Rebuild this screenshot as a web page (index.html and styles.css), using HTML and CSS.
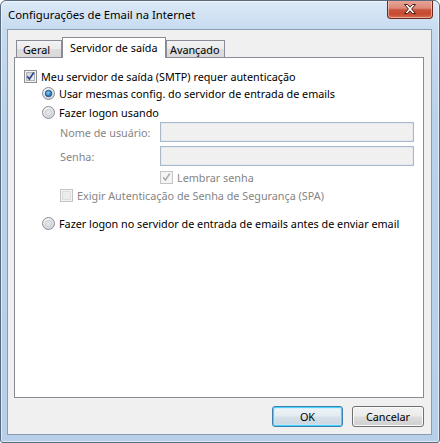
FILE: index.html
```html
<!DOCTYPE html>
<html lang="pt-BR">
<head>
<meta charset="utf-8">
<title>Configurações de Email na Internet</title>
<link rel="stylesheet" href="styles.css">
</head>
<body>
<div class="window">
  <div class="titlebar">
    <span class="title">Configurações de Email na Internet</span>
    <div class="close">
      <svg width="16" height="12" viewBox="0 0 16 12">
        <path d="M2.5 1.5 L5.5 1.5 L8 4.2 L10.5 1.5 L13.5 1.5 L9.6 6 L13.5 10.5 L10.5 10.5 L8 7.8 L5.5 10.5 L2.5 10.5 L6.4 6 Z" fill="#ffffff" stroke="#4a1e14" stroke-width="1" stroke-linejoin="round"/>
      </svg>
    </div>
  </div>
  <div class="client">
    <div class="tabs">
      <div class="tab geral">Geral</div>
      <div class="tab active">Servidor de saída</div>
      <div class="tab avancado">Avançado</div>
    </div>
    <div class="panel">
      <div class="row r1">
        <svg class="box" width="13" height="13" viewBox="0 0 13 13">
          <defs><linearGradient id="cb1" x1="0" y1="0" x2="1" y2="1"><stop offset="0" stop-color="#cbcfd5"/><stop offset="1" stop-color="#f6f6f6"/></linearGradient></defs>
          <rect x="0.5" y="0.5" width="12" height="12" fill="#f4f4f4" stroke="#8f8f8f"/>
          <rect x="2.5" y="2.5" width="8" height="8" fill="url(#cb1)" stroke="#aeb3b9"/>
          <path d="M3.2 6.2 L5.4 9 L9.8 2.6" fill="none" stroke="#35488a" stroke-width="1.7"/>
        </svg>
        <span>Meu servidor de saída (SMTP) requer autenticação</span>
      </div>
      <div class="row r2 ind1">
        <svg class="box" width="13" height="13" viewBox="0 0 13 13">
          <defs>
            <radialGradient id="rb1" cx="0.4" cy="0.3" r="0.8"><stop offset="0" stop-color="#ffffff"/><stop offset="1" stop-color="#c8ccd2"/></radialGradient>
            <radialGradient id="rd1" cx="0.45" cy="0.4" r="0.7"><stop offset="0" stop-color="#8fd4f8"/><stop offset="0.6" stop-color="#2a79b8"/><stop offset="1" stop-color="#174c86"/></radialGradient>
          </defs>
          <circle cx="6.5" cy="6.5" r="6" fill="url(#rb1)" stroke="#8a8e94"/>
          <circle cx="6.5" cy="6.5" r="3.3" fill="url(#rd1)" stroke="#1e4f84" stroke-width="0.8"/>
        </svg>
        <span>Usar mesmas config. do servidor de entrada de emails</span>
      </div>
      <div class="row r3 ind1">
        <svg class="box" width="13" height="13" viewBox="0 0 13 13">
          <defs><radialGradient id="rb2" cx="0.4" cy="0.3" r="0.8"><stop offset="0" stop-color="#ffffff"/><stop offset="1" stop-color="#c8ccd2"/></radialGradient></defs>
          <circle cx="6.5" cy="6.5" r="6" fill="url(#rb2)" stroke="#8a8e94"/>
          <circle cx="6.5" cy="6.5" r="3.3" fill="#e1e3e6" stroke="#c4c8cd" stroke-width="0.8"/>
        </svg>
        <span>Fazer logon usando</span>
      </div>
      <div class="field r4">
        <span class="lbl">Nome de usuário:</span>
        <div class="input"></div>
      </div>
      <div class="field r5">
        <span class="lbl">Senha:</span>
        <div class="input"></div>
      </div>
      <div class="row r6 ind3 disabled">
        <svg class="box" width="13" height="13" viewBox="0 0 13 13">
          <rect x="0.5" y="0.5" width="12" height="12" fill="#f4f4f4" stroke="#c4c4c4"/>
          <path d="M3.2 6.2 L5.4 9 L9.8 2.6" fill="none" stroke="#a8a8a8" stroke-width="1.5"/>
        </svg>
        <span>Lembrar senha</span>
      </div>
      <div class="row r7 ind2 disabled">
        <svg class="box" width="13" height="13" viewBox="0 0 13 13">
          <rect x="0.5" y="0.5" width="12" height="12" fill="#f4f4f4" stroke="#c4c4c4"/>
          <rect x="2.5" y="2.5" width="8" height="8" fill="#ececec" stroke="#dcdcdc"/>
        </svg>
        <span>Exigir Autenticação de Senha de Segurança (SPA)</span>
      </div>
      <div class="row r8 ind1">
        <svg class="box" width="13" height="13" viewBox="0 0 13 13">
          <defs><radialGradient id="rb3" cx="0.4" cy="0.3" r="0.8"><stop offset="0" stop-color="#ffffff"/><stop offset="1" stop-color="#c8ccd2"/></radialGradient></defs>
          <circle cx="6.5" cy="6.5" r="6" fill="url(#rb3)" stroke="#8a8e94"/>
          <circle cx="6.5" cy="6.5" r="3.3" fill="#e1e3e6" stroke="#c4c8cd" stroke-width="0.8"/>
        </svg>
        <span>Fazer logon no servidor de entrada de emails antes de enviar email</span>
      </div>
    </div>
    <div class="footer">
      <button class="btn default">OK</button>
      <button class="btn">Cancelar</button>
    </div>
  </div>
</div>
</body>
</html>
```
FILE: styles.css
```css
* { box-sizing: border-box; }
html, body { margin: 0; padding: 0; background: #ffffff; }
body { font-family: "Noto Sans", "Open Sans", sans-serif; font-size: 10.8px; color: #000; }

.window {
  width: 440px;
  height: 443px;
  border: 1px solid #5a6b80;
  border-radius: 6px 6px 3px 3px;
  background: linear-gradient(180deg, #dce9f7 0px, #c7dbf0 28px, #b9d1ea 120px, #b7cfe9 100%);
  box-shadow: inset 0 0 0 1px rgba(255,255,255,0.55);
  display: flex;
  flex-direction: column;
  padding: 0 7px 7px 6px;
  overflow: hidden;
}

.titlebar {
  height: 28px;
  display: flex;
  align-items: flex-start;
}
.title {
  padding-left: 1px;
  line-height: 27px;
  font-size: 11.3px;
  color: #000;
  white-space: nowrap;
}
.close {
  margin-left: auto;
  margin-right: -1px;
  margin-top: -1px;
  width: 46px;
  height: 19px;
  border: 1px solid #6b2a1d;
  border-top: none;
  border-radius: 0 0 4px 4px;
  background: linear-gradient(180deg, #e8a89a 0%, #dd8a78 45%, #c9533c 55%, #c84a31 80%, #d8745c 100%);
  box-shadow: inset 0 0 0 1px rgba(255,220,210,0.55);
  display: flex;
  align-items: center;
  justify-content: center;
}

.client {
  height: 406px;
  border: 1px solid #8b9bb0;
  background: #f0f0f0;
  padding: 7px 7px 7px 6px;
  display: flex;
  flex-direction: column;
}

.tabs {
  height: 20px;
  display: flex;
  align-items: flex-end;
  padding-left: 2px;
}
.tab {
  height: 17px;
  border: 1px solid #898c95;
  border-bottom: none;
  background: linear-gradient(180deg, #f3f3f3 0%, #ebebeb 50%, #dddddd 51%, #d9d9d9 100%);
  display: flex;
  align-items: center;
  line-height: 15px;
  padding-top: 1px;
  white-space: nowrap;
}
.tab.geral { width: 46px; padding-left: 6px; }
.tab.avancado { width: 59px; padding-left: 3px; }
.tab.active {
  width: 104px;
  height: 21px;
  margin-bottom: -1px;
  padding-left: 7px;
  padding-top: 0;
  padding-bottom: 1px;
  background: #ffffff;
  position: relative;
  z-index: 1;
}

.panel {
  height: 341px;
  border: 1px solid #898c95;
  background: #ffffff;
  padding: 10px 9px 0 9px;
  display: flex;
  flex-direction: column;
}

.row {
  height: 16px;
  display: flex;
  align-items: center;
  white-space: nowrap;
}
.row .box { flex: none; margin-right: 4px; }
.ind1 { padding-left: 18px; }
.ind2 { padding-left: 36px; }
.ind3 { padding-left: 136px; }
.disabled { color: #858585; }

.r2 { margin-top: 1px; }
.r3 { margin-top: 3px; }
.r4 { margin-top: 2px; }
.r5 { margin-top: 4px; }
.r6 { margin-top: 3px; }
.r7 { margin-top: 2px; }
.r8 { margin-top: 12px; }

.field {
  height: 20px;
  display: flex;
  align-items: center;
  padding-left: 36px;
  white-space: nowrap;
}
.field .lbl {
  width: 100px;
  color: #858585;
}
.field .input {
  width: 255px;
  height: 20px;
  border: 1px solid #abb8c8;
  background: #f0f0f0;
  box-shadow: inset 0 0 0 1px #e3e9ef;
}

.footer {
  margin-top: 8px;
  display: flex;
  justify-content: flex-end;
  gap: 9px;
}
.btn {
  width: 72px;
  height: 21px;
  border: 1px solid #707070;
  border-radius: 3px;
  background: linear-gradient(180deg, #f2f2f2 0%, #ebebeb 48%, #dddddd 52%, #cfcfcf 100%);
  box-shadow: inset 0 0 0 1px #fbfbfb;
  font-family: "Noto Sans", "Open Sans", sans-serif;
  font-size: 10.8px;
  color: #000;
  padding: 0;
  line-height: 17px;
}
.btn.default {
  width: 71px;
  border-color: #3c7fb1;
  box-shadow: inset 0 0 0 1px #48d1fb, inset 0 0 0 2px rgba(200,235,250,0.6);
  background: linear-gradient(180deg, #eef4f8 0%, #e4ecf2 48%, #d6e0e8 52%, #c9d6e0 100%);
}
```
